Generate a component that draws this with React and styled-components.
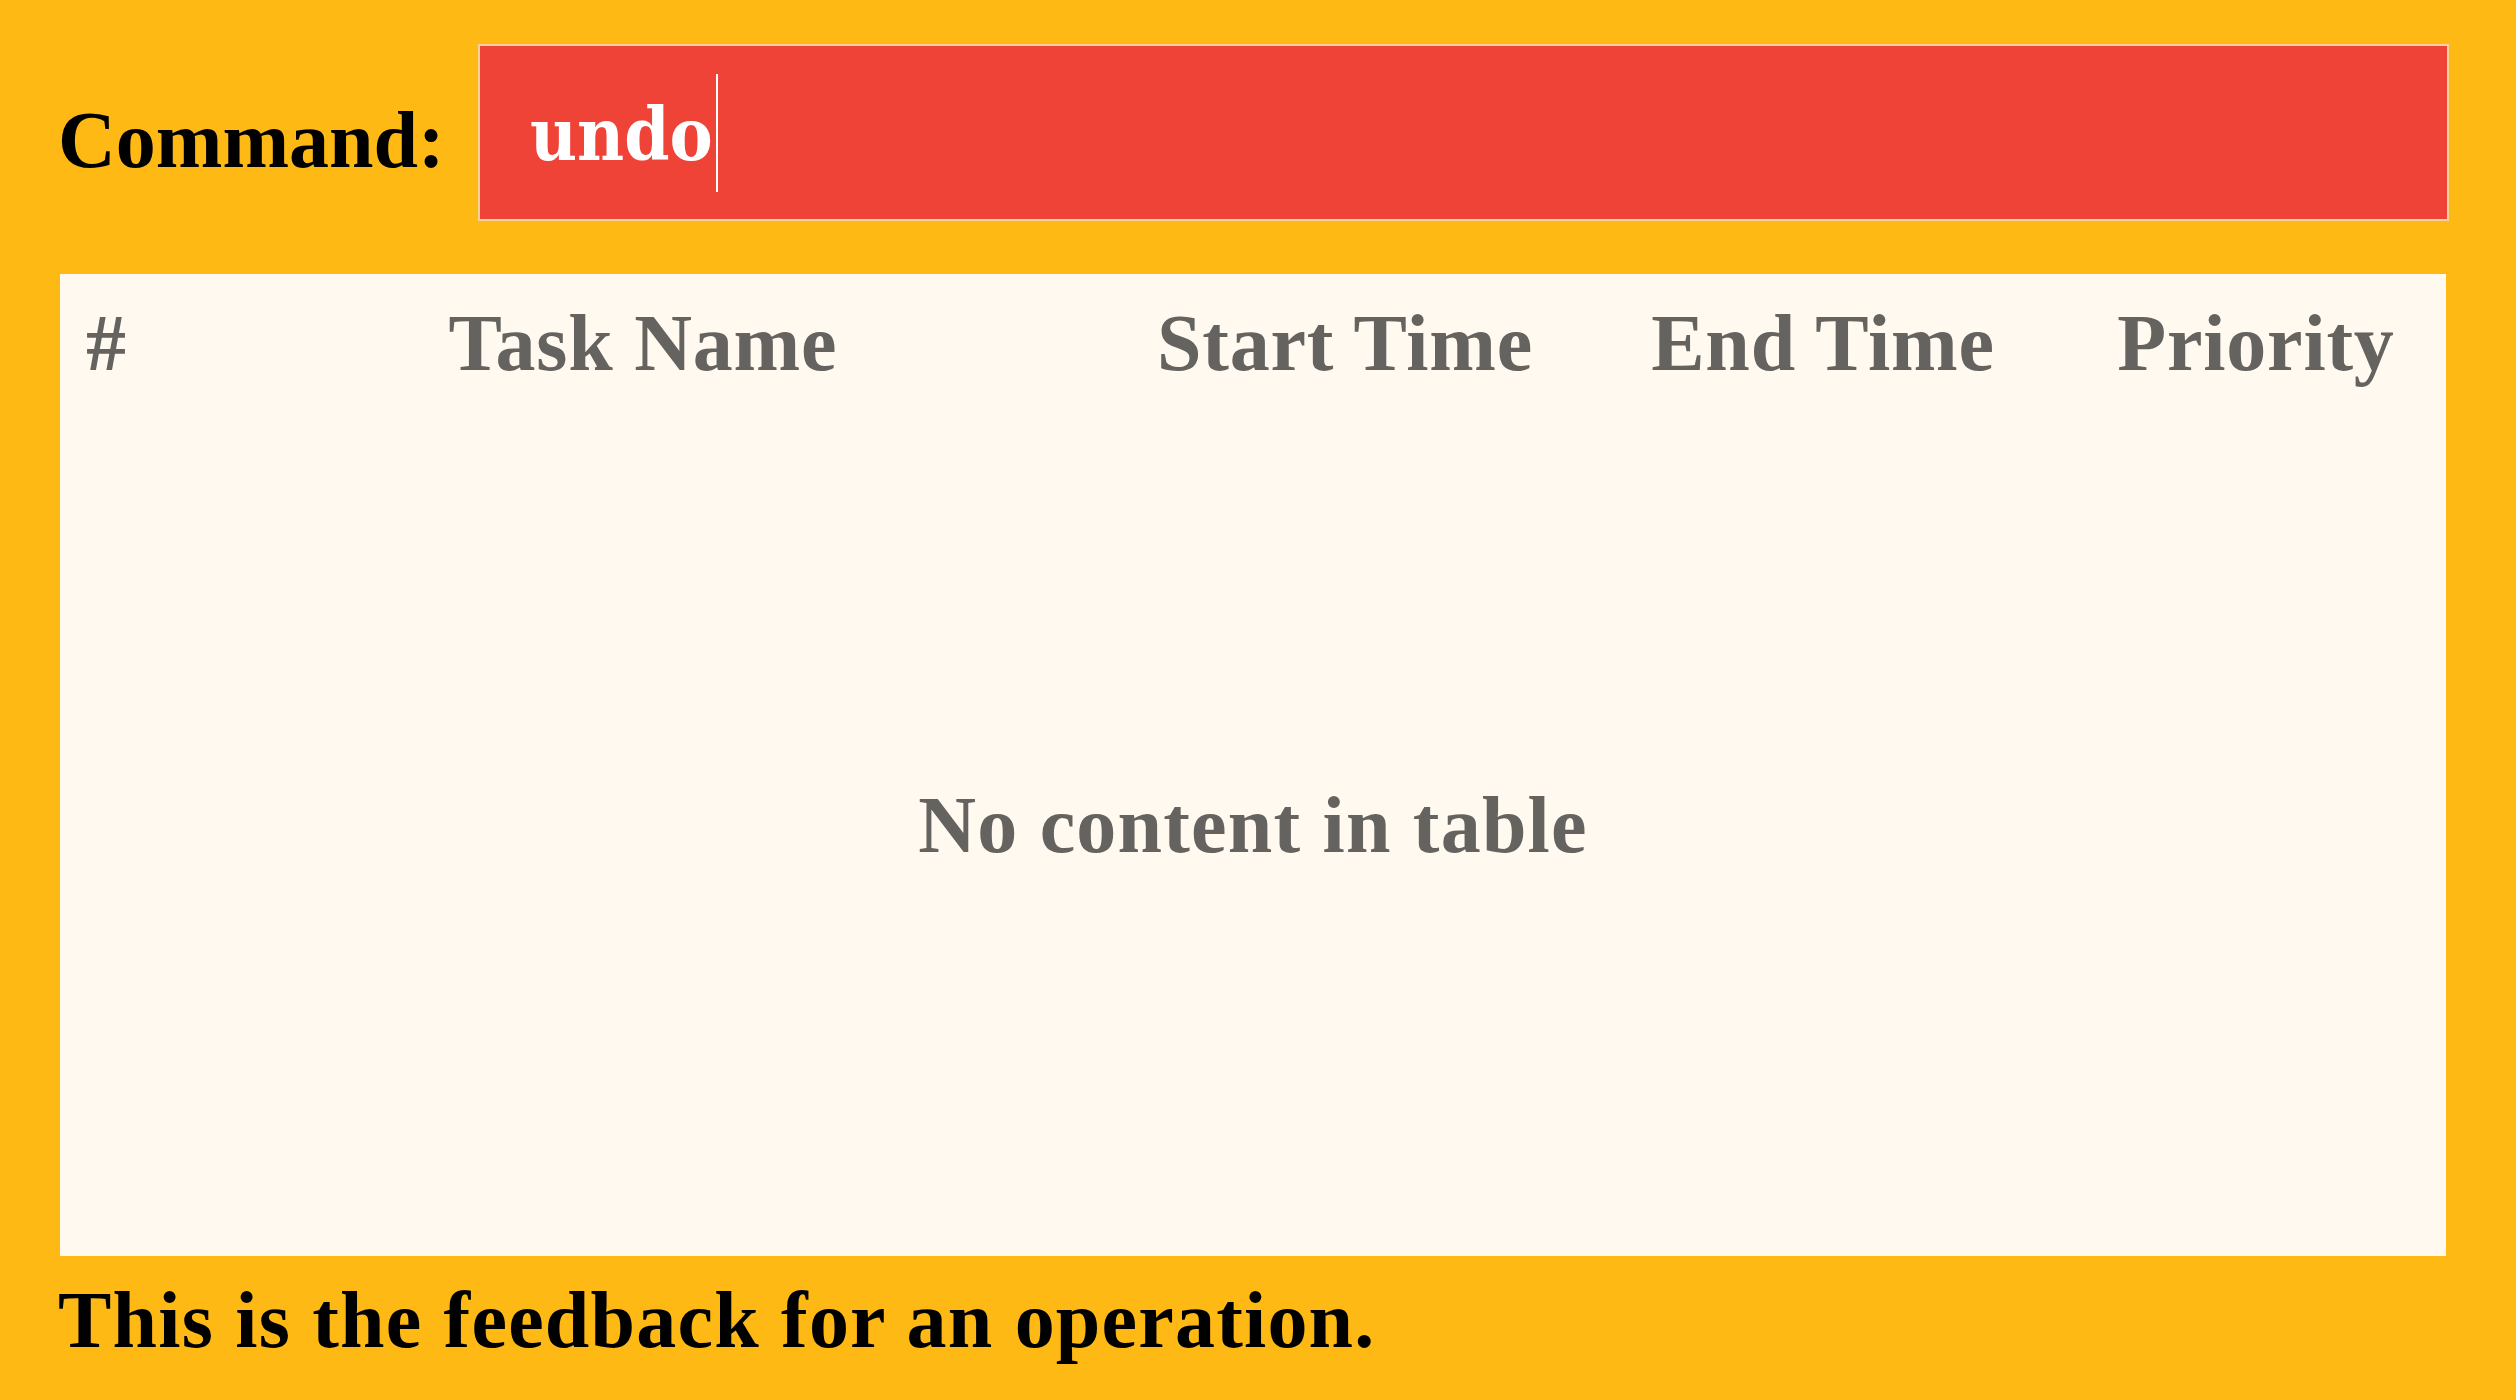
import React from "react"
import styled, { createGlobalStyle } from "styled-components"

const colors = {
  yellow: "#feb915",
  red: "#f04338",
  fieldBorder: "#fad39a",
  paper: "#fff9ef",
  gray: "#65635f",
  ink: "#000000",
  white: "#ffffff",
}

const GlobalStyle = createGlobalStyle`
  html, body {
    margin: 0;
    padding: 0;
    background: ${colors.yellow};
  }
  * {
    box-sizing: border-box;
  }
`

const Page = styled.main`
  min-height: 100vh;
  background: ${colors.yellow};
  padding: 44px 70px 0 60px;
  display: flex;
  flex-direction: column;
  font-family: "Liberation Serif", "DejaVu Serif", serif;
  font-weight: 700;
  font-size: 80px;
`

const CommandRow = styled.div`
  display: grid;
  grid-template-columns: 418px 1fr;
  align-items: center;
  margin-right: -3px;
`

const Label = styled.label`
  color: ${colors.ink};
  line-height: 80px;
  padding-top: 14px;
  margin-left: -2px;
`

const Field = styled.div`
  height: 177px;
  background: ${colors.red};
  border: 2px solid ${colors.fieldBorder};
  display: flex;
  align-items: center;
  padding-left: 50px;
`

const FieldValue = styled.span`
  color: ${colors.white};
  font-family: "DejaVu Serif Condensed", "DejaVu Serif", serif;
  font-weight: 700;
  font-size: 72px;
  line-height: 1;
  padding-top: 4px;
`

const Caret = styled.span`
  width: 2px;
  height: 118px;
  margin-left: 3px;
  background: ${colors.white};
`

const Table = styled.section`
  margin-top: 53px;
  height: 982px;
  background: ${colors.paper};
  display: flex;
  flex-direction: column;
  color: ${colors.gray};
  letter-spacing: 0.8px;
`

const HeaderRow = styled.div`
  display: grid;
  grid-template-columns: 92px 982px 422px 534px 332px 1fr;
  height: 120px;
  padding-top: 18px;
`

const HeaderCell = styled.div`
  line-height: 102px;
  text-align: ${props => (props.$align === "left" ? "left" : "center")};
  padding-left: ${props => (props.$align === "left" ? "26px" : "0")};
  white-space: nowrap;
`

const EmptyBody = styled.div`
  flex: 1;
  display: flex;
  align-items: center;
  justify-content: center;
  line-height: 80px;
  letter-spacing: 1.2px;
`

const Feedback = styled.p`
  margin: 24px 0 0 -2px;
  line-height: 80px;
  color: ${colors.ink};
  letter-spacing: 1.2px;
`

const columns = [
  { key: "index", title: "#", align: "left" },
  { key: "name", title: "Task Name" },
  { key: "start", title: "Start Time" },
  { key: "end", title: "End Time" },
  { key: "priority", title: "Priority" },
]

const App = () => {
  return (
    <>
      <GlobalStyle />
      <Page>
        <CommandRow>
          <Label>Command:</Label>
          <Field>
            <FieldValue>undo</FieldValue>
            <Caret />
          </Field>
        </CommandRow>

        <Table>
          <HeaderRow>
            {columns.map(col => (
              <HeaderCell key={col.key} $align={col.align}>
                {col.title}
              </HeaderCell>
            ))}
          </HeaderRow>
          <EmptyBody>No content in table</EmptyBody>
        </Table>

        <Feedback>This is the feedback for an operation.</Feedback>
      </Page>
    </>
  )
}

export default App
